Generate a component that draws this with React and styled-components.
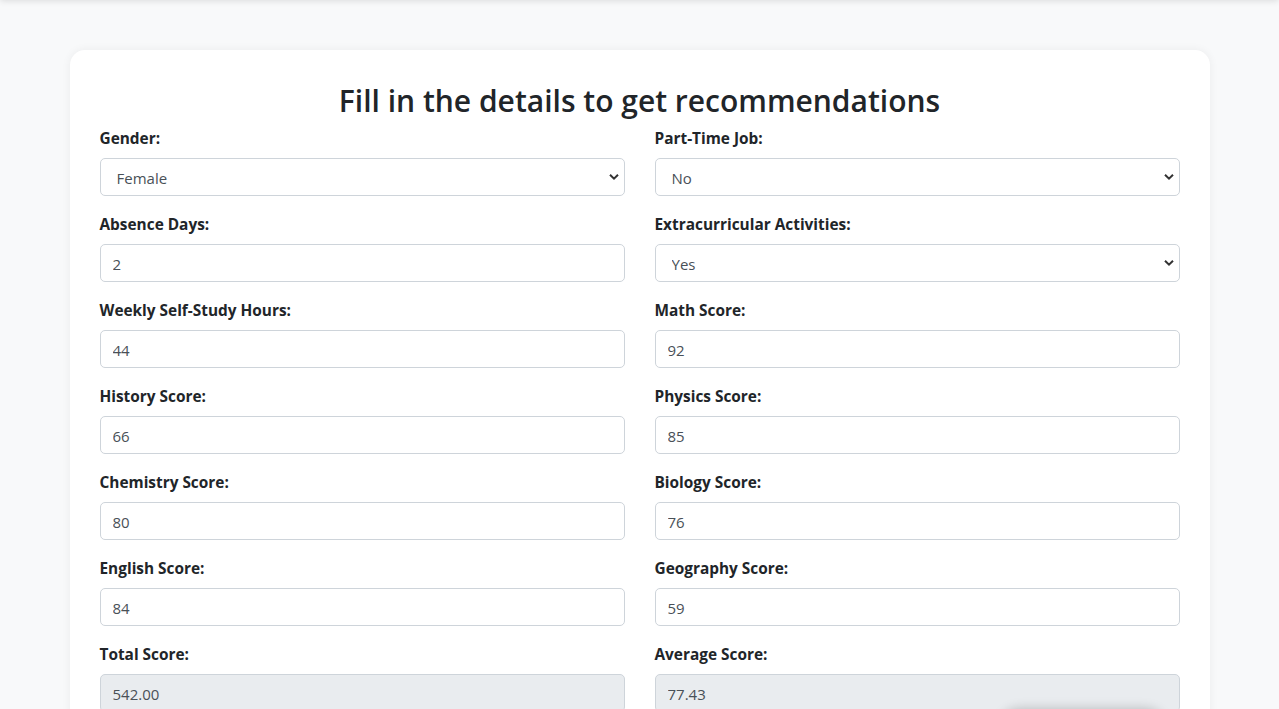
import React from "react";
import styled, { createGlobalStyle } from "styled-components";

const Global = createGlobalStyle`
  * { box-sizing: border-box; }
  html, body { margin: 0; padding: 0; }
  body {
    background: #f8f9fa;
    font-family: "Open Sans", "Noto Sans", sans-serif;
    color: #212529;
    overflow: hidden;
  }
`;

const TopShade = styled.div`
  position: fixed;
  top: -20px;
  left: 0;
  right: 0;
  height: 20px;
  box-shadow: 0 1px 6px rgba(0, 0, 0, 0.12);
  background: #f8f9fa;
`;

const FloatShade = styled.div`
  position: fixed;
  left: 1000px;
  width: 165px;
  bottom: -40px;
  height: 40px;
  border-radius: 20px;
  box-shadow: 0 0 12px rgba(0, 0, 0, 0.22);
  background: #e9ecef;
`;

const Page = styled.div`
  padding-top: 50px;
  display: flex;
  justify-content: center;
`;

const Card = styled.div`
  width: 1140px;
  background: #fff;
  border-radius: 15px;
  box-shadow: 0 0 10px rgba(0, 0, 0, 0.06);
  padding: 30px;
`;

const Title = styled.h2`
  margin: 0 0 8px;
  padding-top: 2px;
  font-size: 30px;
  font-weight: 600;
  line-height: 38px;
  height: 38px;
  text-align: center;
  color: #212529;
`;

const Grid = styled.div`
  display: grid;
  grid-template-columns: 1fr 1fr;
  column-gap: 30px;
`;

const Field = styled.div`
  margin-bottom: 16px;
`;

const Label = styled.label`
  display: block;
  font-size: 15.4px;
  font-weight: 700;
  line-height: 24px;
  padding-top: 1px;
  margin-bottom: 7px;
  color: #212529;
`;

const Input = styled.input`
  display: block;
  width: 100%;
  height: 38px;
  padding: 7px 12px 5px;
  font-family: inherit;
  font-size: 15px;
  color: #495057;
  background: ${(p) => (p.readOnly ? "#e9ecef" : "#fff")};
  border: 1px solid #ced4da;
  border-radius: 5px;
  outline: none;
`;

const SelectWrap = styled.div`
  position: relative;
`;

const Select = styled.select`
  display: block;
  width: 100%;
  height: 38px;
  padding: 7px 30px 5px 16px;
  font-family: inherit;
  font-size: 15px;
  color: #495057;
  background: #fff;
  border: 1px solid #ced4da;
  border-radius: 5px;
  appearance: none;
  -webkit-appearance: none;
  outline: none;
`;

const Chevron = styled.svg`
  position: absolute;
  right: 6px;
  top: 50%;
  transform: translateY(-50%);
  pointer-events: none;
`;

const fields = [
  { label: "Gender:", type: "select", value: "Female", options: ["Male", "Female"] },
  { label: "Part-Time Job:", type: "select", value: "No", options: ["Yes", "No"] },
  { label: "Absence Days:", value: "2" },
  { label: "Extracurricular Activities:", type: "select", value: "Yes", options: ["Yes", "No"] },
  { label: "Weekly Self-Study Hours:", value: "44" },
  { label: "Math Score:", value: "92" },
  { label: "History Score:", value: "66" },
  { label: "Physics Score:", value: "85" },
  { label: "Chemistry Score:", value: "80" },
  { label: "Biology Score:", value: "76" },
  { label: "English Score:", value: "84" },
  { label: "Geography Score:", value: "59" },
  { label: "Total Score:", value: "542.00", readOnly: true },
  { label: "Average Score:", value: "77.43", readOnly: true },
];

function Control({ f }) {
  if (f.type === "select") {
    return (
      <SelectWrap>
        <Select defaultValue={f.value}>
          {f.options.map((o) => (
            <option key={o}>{o}</option>
          ))}
        </Select>
        <Chevron width="10" height="7" viewBox="0 0 10 7">
          <path d="M1 1.2 L5 5.2 L9 1.2" fill="none" stroke="#333" strokeWidth="2" />
        </Chevron>
      </SelectWrap>
    );
  }
  return <Input defaultValue={f.value} readOnly={f.readOnly} />;
}

export default function App() {
  return (
    <>
      <Global />
      <TopShade />
      <Page>
        <Card>
          <Title>Fill in the details to get recommendations</Title>
          <Grid>
            {fields.map((f) => (
              <Field key={f.label}>
                <Label>{f.label}</Label>
                <Control f={f} />
              </Field>
            ))}
          </Grid>
        </Card>
      </Page>
      <FloatShade />
    </>
  );
}
